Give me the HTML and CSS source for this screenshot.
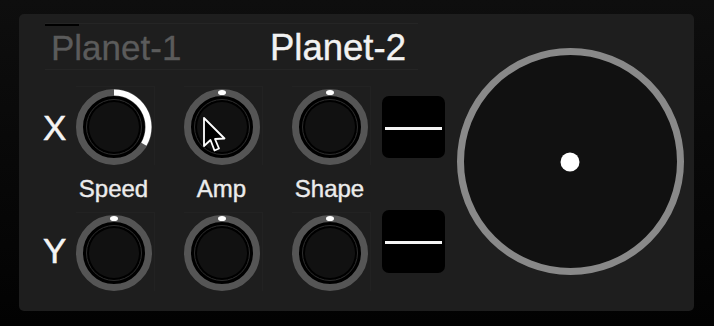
FILE: index.html
```html
<!DOCTYPE html>
<html>
<head>
<meta charset="utf-8">
<link rel="stylesheet" href="styles.css">
</head>
<body>
<div class="panel">
  <div class="left">
    <div class="tabs">
      <span class="tab-indicator"></span>
      <div class="tab tab-inactive">Planet-1</div>
      <div class="tab tab-active">Planet-2</div>
    </div>

    <div class="row row-x">
      <div class="axis">X</div>
      <div class="kbox">
        <svg class="knob" viewBox="0 0 76 76" width="76" height="76">
          <circle cx="38" cy="38" r="34.5" fill="#000" stroke="#555" stroke-width="7"/>
          <circle cx="38" cy="38" r="27.5" fill="#000" stroke="#2e2e2e" stroke-width="1"/>
          <circle cx="38" cy="38" r="25" fill="#111"/>
          <path d="M38 3.5 A34.5 34.5 0 0 1 67.88 55.25" fill="none" stroke="#fff" stroke-width="6"/>
        </svg>
      </div>
      <div class="kbox">
        <svg class="knob" viewBox="0 0 76 76" width="76" height="76">
          <circle cx="38" cy="38" r="34.5" fill="#000" stroke="#555" stroke-width="7"/>
          <circle cx="38" cy="38" r="27.5" fill="#000" stroke="#2e2e2e" stroke-width="1"/>
          <circle cx="38" cy="38" r="25" fill="#111"/>
          <ellipse cx="38" cy="3.5" rx="4" ry="2.6" fill="#fff"/>
        </svg>
        <svg class="cursor" viewBox="0 0 24 37" width="24" height="37">
          <path d="M1 1 L1 29 L7.5 23 L11.5 33.5 L16 31.5 L12 22 L21.5 21.5 Z" fill="#000" stroke="#fff" stroke-width="1.8" stroke-linejoin="round"/>
        </svg>
      </div>
      <div class="kbox last">
        <svg class="knob" viewBox="0 0 76 76" width="76" height="76">
          <circle cx="38" cy="38" r="34.5" fill="#000" stroke="#555" stroke-width="7"/>
          <circle cx="38" cy="38" r="27.5" fill="#000" stroke="#2e2e2e" stroke-width="1"/>
          <circle cx="38" cy="38" r="25" fill="#111"/>
          <ellipse cx="38" cy="3.5" rx="4" ry="2.6" fill="#fff"/>
        </svg>
      </div>
      <div class="switch sw-x"><span class="sw-line"></span></div>
    </div>

    <div class="labels">
      <span class="lbl">Speed</span>
      <span class="lbl">Amp</span>
      <span class="lbl">Shape</span>
    </div>

    <div class="row row-y">
      <div class="axis">Y</div>
      <div class="kbox">
        <svg class="knob" viewBox="0 0 76 76" width="76" height="76">
          <circle cx="38" cy="38" r="34.5" fill="#000" stroke="#555" stroke-width="7"/>
          <circle cx="38" cy="38" r="27.5" fill="#000" stroke="#2e2e2e" stroke-width="1"/>
          <circle cx="38" cy="38" r="25" fill="#111"/>
          <ellipse cx="38" cy="3.5" rx="4" ry="2.6" fill="#fff"/>
        </svg>
      </div>
      <div class="kbox">
        <svg class="knob" viewBox="0 0 76 76" width="76" height="76">
          <circle cx="38" cy="38" r="34.5" fill="#000" stroke="#555" stroke-width="7"/>
          <circle cx="38" cy="38" r="27.5" fill="#000" stroke="#2e2e2e" stroke-width="1"/>
          <circle cx="38" cy="38" r="25" fill="#111"/>
          <ellipse cx="38" cy="3.5" rx="4" ry="2.6" fill="#fff"/>
        </svg>
      </div>
      <div class="kbox last">
        <svg class="knob" viewBox="0 0 76 76" width="76" height="76">
          <circle cx="38" cy="38" r="34.5" fill="#000" stroke="#555" stroke-width="7"/>
          <circle cx="38" cy="38" r="27.5" fill="#000" stroke="#2e2e2e" stroke-width="1"/>
          <circle cx="38" cy="38" r="25" fill="#111"/>
          <ellipse cx="38" cy="3.5" rx="4" ry="2.6" fill="#fff"/>
        </svg>
      </div>
      <div class="switch sw-y"><span class="sw-line"></span></div>
    </div>
  </div>

  <div class="pad">
    <svg viewBox="0 0 227 227" width="227" height="227">
      <circle cx="113.5" cy="113.5" r="110" fill="#111" stroke="#898989" stroke-width="7"/>
      <circle cx="113" cy="114" r="9.5" fill="#fff"/>
    </svg>
  </div>
</div>
</body>
</html>
```
FILE: styles.css
```css
html, body {
  margin: 0;
  padding: 0;
}
body {
  width: 714px;
  height: 326px;
  overflow: hidden;
  background: linear-gradient(#0e0e0e, #020202);
  font-family: "Liberation Sans", Arial, sans-serif;
}
.panel {
  margin: 14px 0 0 19px;
  width: 675px;
  height: 297px;
  box-sizing: border-box;
  padding: 9px 0 0 24px;
  background: #1e1e1e;
  border-radius: 5px;
  display: flex;
  align-items: flex-start;
}
.left {
  width: 402px;
  display: flex;
  flex-direction: column;
}
.tabs {
  position: relative;
  margin-left: 2px;
  width: 373px;
  border-top: 1px solid #252525;
  border-bottom: 1px solid #252525;
  display: flex;
  align-items: baseline;
}
.tab-indicator {
  position: absolute;
  left: 0;
  top: 0;
  width: 34px;
  height: 2px;
  background: #000;
}
.tab {
  padding-top: 3px;
  line-height: 42px;
  white-space: nowrap;
}
.tab-inactive {
  width: 225px;
  box-sizing: border-box;
  padding-left: 6px;
  font-size: 35px;
  color: #5b5b5b;
  -webkit-text-stroke: 0.3px #5b5b5b;
}
.tab-active {
  font-size: 36.5px;
  color: #f2f2f2;
  -webkit-text-stroke: 0.4px #f2f2f2;
}
.row {
  display: flex;
  align-items: center;
}
.row-x {
  margin-top: 16px;
}
.row-y {
  margin-top: 11px;
}
.axis {
  width: 32.5px;
  font-size: 35px;
  line-height: 40px;
  color: #f4f4f4;
  -webkit-text-stroke: 0.5px #f4f4f4;
}
.row-x .axis {
  margin-top: 5px;
}
.kbox {
  position: relative;
  width: 79px;
  box-sizing: border-box;
  padding-top: 2px;
  border-top: 1px solid #222;
  border-right: 1px solid #222;
  margin-right: 29px;
}
.kbox.last {
  margin-right: 11.5px;
}
.knob {
  display: block;
}
.cursor {
  position: absolute;
  left: 19.5px;
  top: 30px;
}
.switch {
  width: 63px;
  height: 62px;
  box-sizing: border-box;
  padding: 2px 3px 0;
  border-radius: 7px;
  background: #000;
  display: flex;
  align-items: center;
  align-self: flex-start;
}
.sw-x {
  margin-top: 10px;
}
.sw-y {
  margin-top: -2px;
  height: 63px;
}
.sw-line {
  flex: 1;
  height: 3px;
  background: #f4f4f4;
}
.labels {
  display: flex;
  margin-top: 11.7px;
  padding-left: 32.5px;
}
.lbl {
  width: 76px;
  margin-right: 32px;
  text-align: center;
  font-size: 24px;
  line-height: 24px;
  color: #ececec;
  -webkit-text-stroke: 0.4px #ececec;
  white-space: nowrap;
}
.pad {
  margin-left: 12px;
  margin-top: 25px;
}
.pad svg {
  display: block;
}
```
